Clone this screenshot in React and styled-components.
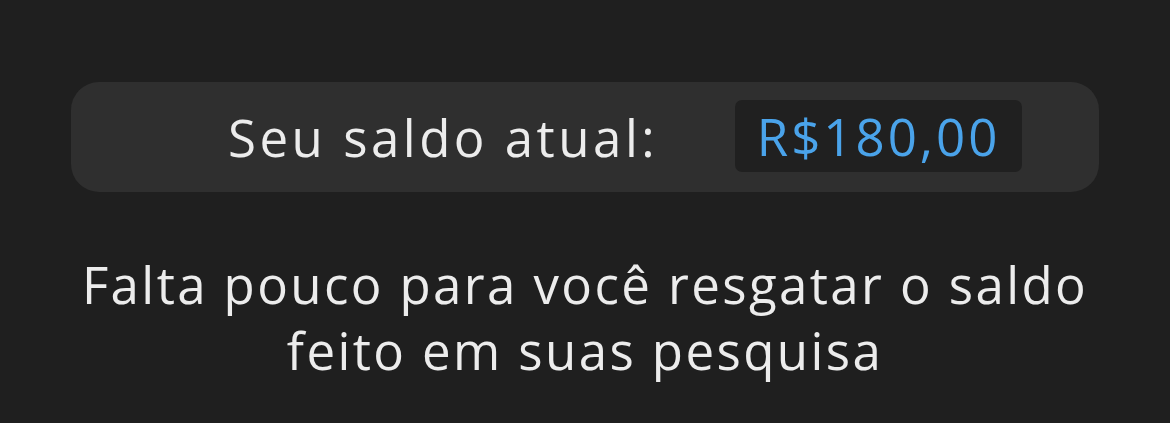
import React from "react";
import styled, { createGlobalStyle } from "styled-components";

const GlobalStyle = createGlobalStyle`
  html, body {
    margin: 0;
    padding: 0;
    background: #1f1f1f;
  }
  body {
    font-family: "Open Sans", "Liberation Sans", sans-serif;
  }
`;

const Page = styled.div`
  width: 1170px;
  height: 423px;
  background: #1f1f1f;
  padding-top: 82px;
  box-sizing: border-box;
  display: flex;
  flex-direction: column;
  align-items: center;
`;

const BalanceCard = styled.div`
  width: 1028px;
  height: 110px;
  box-sizing: border-box;
  padding: 0 77px 0 157px;
  background: #2f2f2f;
  border-radius: 28px;
  display: flex;
  align-items: center;
  justify-content: space-between;
`;

const Label = styled.span`
  color: #ececec;
  font-size: 51px;
  letter-spacing: 3.5px;
  line-height: 1;
`;

const ValueBox = styled.div`
  width: 287px;
  height: 72px;
  margin-top: -2px;
  border-radius: 7px;
  background: #202020;
  display: flex;
  align-items: center;
  justify-content: center;
`;

const Value = styled.span`
  color: #4aa3ea;
  font-size: 51px;
  letter-spacing: 3px;
  line-height: 1;
`;

const Message = styled.p`
  margin: 59px 0 0;
  width: 1100px;
  text-align: center;
  color: #ececec;
  font-size: 51px;
  line-height: 66px;
  letter-spacing: 2.4px;
`;

export default function App() {
  return (
    <>
      <GlobalStyle />
      <Page>
        <BalanceCard>
          <Label>Seu saldo atual:</Label>
          <ValueBox>
            <Value>R$180,00</Value>
          </ValueBox>
        </BalanceCard>
        <Message>
          Falta pouco para você resgatar o saldo
          <br />
          feito em suas pesquisa
        </Message>
      </Page>
    </>
  );
}
